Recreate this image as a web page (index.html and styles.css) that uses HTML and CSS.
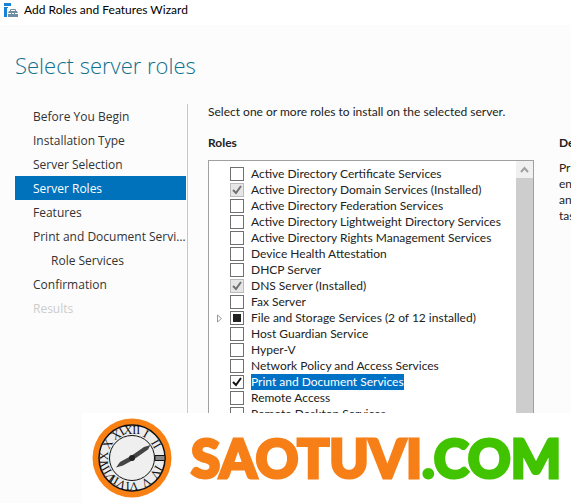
FILE: index.html
```html
<!DOCTYPE html>
<html lang="en">
  <head>
    <meta charset="UTF-8" />
    <meta name="viewport" content="width=device-width, initial-scale=1.0" />
    <title>Add Roles and Features Wizard</title>
    <link rel="stylesheet" href="styles.css">
  </head>
  <body>
    <header class="titlebar">
      <svg class="app-icon" width="15" height="15" viewBox="0 0 15 15" aria-hidden="true">
        <path fill="#1683d8" d="M0 0h7v3H0zM0 4h4v10H0z" />
        <path fill="#fff" d="M3 5h12v10H3z" />
        <path fill="none" stroke="#6f8ea3" d="M6.500 8V6.500h5V8" />
        <path fill="#6f8ea3" d="M5 8h8l1 2v4H4v-4z" />
        <path stroke="#fff" d="M4 10.500h3m1 0h2m1 0h3" />
      </svg>
      <span>Add Roles and Features Wizard</span>
    </header>

    <main class="wizard">
      <h1>Select server roles</h1>
      <div class="columns">
        <nav class="steps">
          <a href="#">Before You Begin</a>
          <a href="#">Installation Type</a>
          <a href="#">Server Selection</a>
          <a href="#" class="current">Server Roles</a>
          <a href="#">Features</a>
          <a href="#">Print and Document Services</a>
          <a href="#" class="sub">Role Services</a>
          <a href="#">Confirmation</a>
          <a href="#" class="disabled">Results</a>
        </nav>

        <section class="content">
          <p class="intro">Select one or more roles to install on the selected server.</p>
          <div class="panels">
            <div class="roles">
              <h2>Roles</h2>
              <div class="list">
                <div class="items">
                  <label><input type="checkbox"><span>Active Directory Certificate Services</span></label>
                  <label><input type="checkbox" checked disabled><span>Active Directory Domain Services (Installed)</span></label>
                  <label><input type="checkbox"><span>Active Directory Federation Services</span></label>
                  <label><input type="checkbox"><span>Active Directory Lightweight Directory Services</span></label>
                  <label><input type="checkbox"><span>Active Directory Rights Management Services</span></label>
                  <label><input type="checkbox"><span>Device Health Attestation</span></label>
                  <label><input type="checkbox"><span>DHCP Server</span></label>
                  <label><input type="checkbox" checked disabled><span>DNS Server (Installed)</span></label>
                  <label><input type="checkbox"><span>Fax Server</span></label>
                  <label class="parent">
                    <svg class="expander" width="6" height="9" viewBox="0 0 6 9" aria-hidden="true"><path fill="#fff" stroke="#999" d="M.5 1v7L4.500 4.500z" /></svg>
                    <input type="checkbox" class="partial"><span>File and Storage Services (2 of 12 installed)</span>
                  </label>
                  <label><input type="checkbox"><span>Host Guardian Service</span></label>
                  <label><input type="checkbox"><span>Hyper-V</span></label>
                  <label><input type="checkbox"><span>Network Policy and Access Services</span></label>
                  <label class="selected"><input type="checkbox" checked><span>Print and Document Services</span></label>
                  <label><input type="checkbox"><span>Remote Access</span></label>
                  <label><input type="checkbox"><span>Remote Desktop Services</span></label>
                </div>
                <div class="scrollbar">
                  <button type="button" aria-label="Scroll up">
                    <svg width="9" height="7" viewBox="0 0 9 7"><path fill="none" stroke="#a0a0a0" stroke-width="2" d="M1 6l3.500-4L8 6" /></svg>
                  </button>
                </div>
              </div>
            </div>
            <div class="description">
              <h2>Description</h2>
              <p>Print<br>enables<br>and<br>tasks</p>
            </div>
          </div>
        </section>
      </div>
    </main>

    <footer class="banner">
      <svg class="clock" width="80" height="80" viewBox="-40 -40 80 80" aria-hidden="true">
        <circle r="39.500" fill="#f98012" />
        <circle r="33" fill="#ececec" stroke="#111" stroke-width="1.500" />
        <circle r="22.500" fill="#efefef" stroke="#111" />
        <path fill="#888" stroke="#111" d="M23-2.500h10v5H23z" />
        <g class="numerals">
          <text y="-24">XII</text>
          <text y="-24" transform="rotate(30)">I</text>
          <text y="-24" transform="rotate(60)">II</text>
          <text y="-24" transform="rotate(120)">IV</text>
          <text y="-24" transform="rotate(150)">V</text>
          <text y="-24" transform="rotate(180)">VI</text>
          <text y="-24" transform="rotate(210)">VII</text>
          <text y="-24" transform="rotate(240)">VIII</text>
          <text y="-24" transform="rotate(270)">IX</text>
          <text y="-24" transform="rotate(300)">X</text>
          <text y="-24" transform="rotate(330)">XI</text>
        </g>
        <path fill="#444" d="M18.500-13L16-8.500 1 2-9 7.500l-7 2 4-5.500L-1-2 12-11z" />
        <circle r="3" fill="#222" />
      </svg>
      <span class="brand">SAOTUVI<span class="tld">.COM</span></span>
    </footer>
  </body>
</html>
```
FILE: styles.css
```css
* {
  box-sizing: border-box;
}

body {
  margin: 0;
  height: 100vh;
  display: flex;
  flex-direction: column;
  overflow: hidden;
  background-color: #fcfcfc;
  color: #222;
  font-family: Lato, "Open Sans", sans-serif;
  font-size: 12px;
  line-height: 16px;
}

h1,
h2,
p {
  margin: 0;
}

.titlebar {
  display: flex;
  align-items: center;
  gap: 5px;
  height: 25px;
  padding: 0 4px 5px;
  flex-shrink: 0;
  background-color: #fff;
  color: #000;
}

.wizard {
  flex: 1;
  min-height: 0;
  overflow: hidden;
}

h1 {
  padding: 24px 15px 23px;
  font-family: "Open Sans", sans-serif;
  font-size: 22px;
  line-height: 32px;
  font-weight: 300;
  color: #10708f;
}

.columns {
  display: flex;
}

.steps {
  flex: 0 0 173px;
  min-width: 0;
  margin-left: 15px;
  padding-right: 1px;
  border-right: 1px solid #c8c8c8;
  font-family: "Open Sans", sans-serif;
  line-height: 24px;
}

.steps a {
  display: block;
  height: 24px;
  padding: 1px 0 0 18px;
  overflow: hidden;
  text-overflow: ellipsis;
  white-space: nowrap;
  color: #333;
  text-decoration: none;
}

.steps .current {
  background-color: #0072bc;
  color: #fff;
}

.steps .sub {
  padding-left: 36px;
}

.steps .disabled {
  color: #ccc;
}

.content {
  flex: 1;
  min-width: 0;
  padding-left: 20px;
}

.intro {
  margin-bottom: 15px;
}

h2 {
  margin-bottom: 9px;
  font-size: 12px;
  line-height: 16px;
  font-weight: 700;
}

.panels {
  display: flex;
  gap: 25px;
}

.roles {
  flex: 0 0 326px;
}

.list {
  display: flex;
  border: 1px solid #a0a0a0;
  background-color: #fff;
}

.items {
  flex: 1;
  min-width: 0;
  padding: 5px 0 5px 21px;
}

.items label {
  display: flex;
  align-items: center;
  gap: 7px;
  height: 16px;
  white-space: nowrap;
}

.items .parent {
  margin-left: -13px;
}

input {
  appearance: none;
  width: 14px;
  height: 14px;
  margin: 0;
  flex-shrink: 0;
  border: 1px solid #707070;
  background: #fff center no-repeat;
}

input:checked {
  background-image: url("data:image/svg+xml,%3Csvg xmlns='http://www.w3.org/2000/svg' width='12' height='12'%3E%3Cpath d='M2 6l3 3 5-7' fill='none' stroke='%23111' stroke-width='2'/%3E%3C/svg%3E");
}

input:disabled {
  border-color: #bcbcbc;
  background-color: #e6e6e6;
  background-image: url("data:image/svg+xml,%3Csvg xmlns='http://www.w3.org/2000/svg' width='12' height='12'%3E%3Cpath d='M2 6l3 3 5-7' fill='none' stroke='%23707070' stroke-width='2'/%3E%3C/svg%3E");
}

input.partial {
  background: linear-gradient(#222, #222) center / 8px 8px no-repeat #fff;
}

.selected span {
  background-color: #0072c6;
  color: #fff;
}

.scrollbar {
  width: 17px;
  background-color: #cdcdcd;
}

.scrollbar button {
  display: flex;
  align-items: center;
  justify-content: center;
  width: 100%;
  height: 17px;
  padding: 0;
  border: 0;
  background-color: #f0f0f0;
}

.description {
  flex: 1;
  min-width: 0;
  overflow: hidden;
  white-space: nowrap;
}

.banner {
  display: flex;
  align-items: center;
  gap: 19px;
  flex: 0 0 90px;
  margin-left: 82px;
  padding-left: 10px;
  background-color: #fff;
}

.clock {
  flex-shrink: 0;
}

.numerals {
  font-family: "Liberation Serif", serif;
  font-size: 12px;
  text-anchor: middle;
  fill: #111;
}

.brand {
  font-family: Lato, sans-serif;
  font-size: 53px;
  line-height: 72px;
  font-weight: 900;
  color: #f77f17;
  -webkit-text-stroke: 3px;
}

.tld {
  color: #41c300;
}
```
